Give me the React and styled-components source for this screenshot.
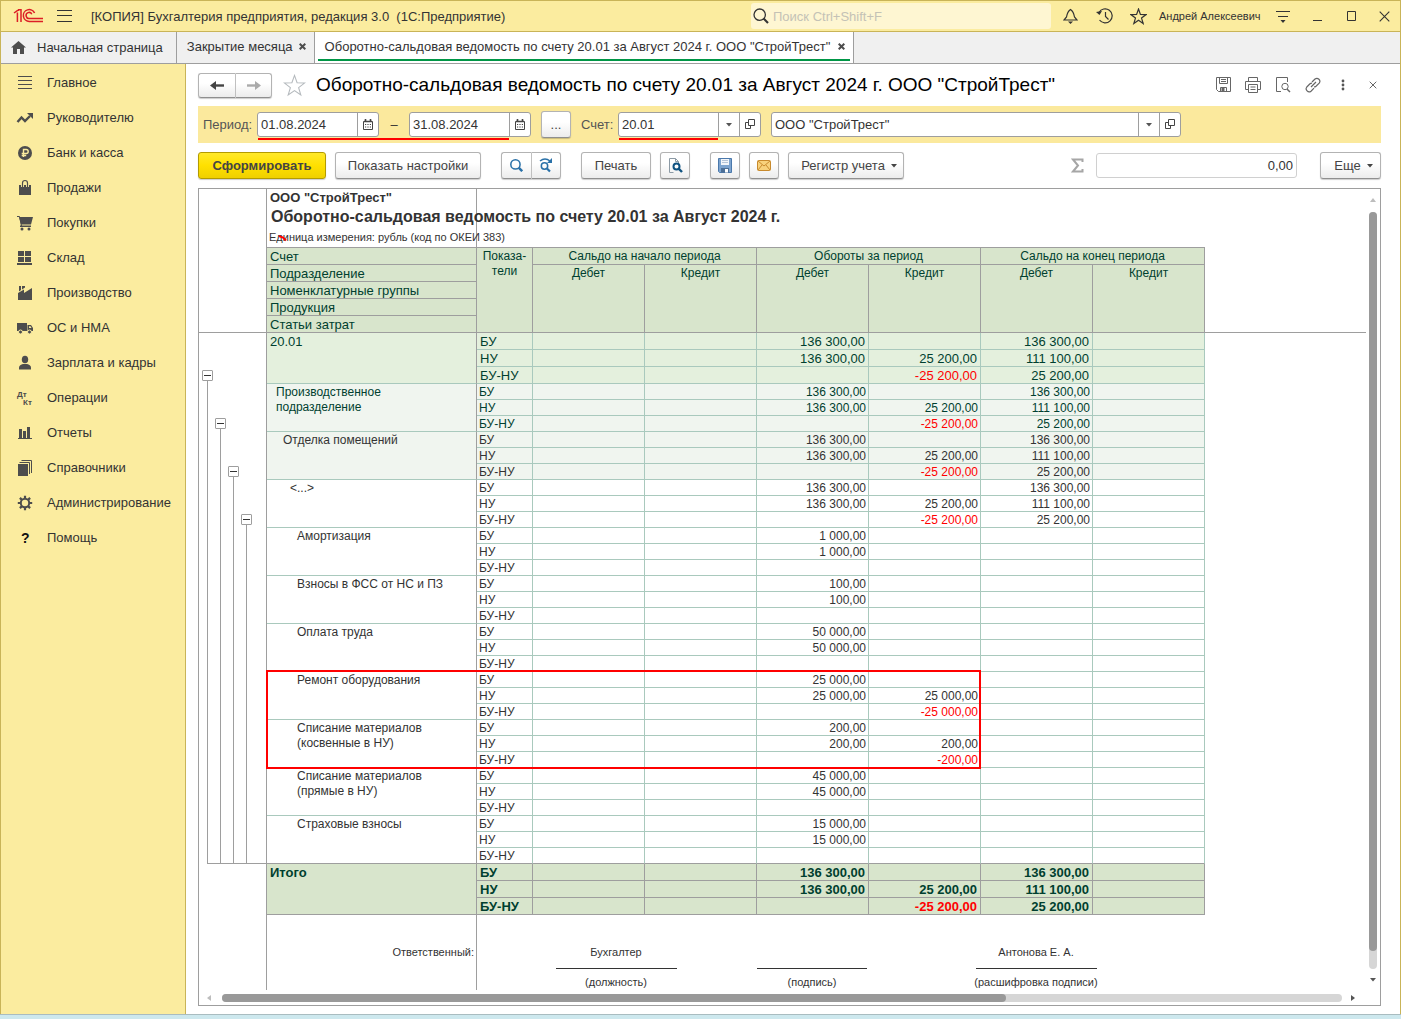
import React from "react";
import styled, { createGlobalStyle } from "styled-components";

const line = "#9e9e9e";
const mint = "#a9c9bd";
const ink = "#333333";

const GlobalStyle = createGlobalStyle`
  *, *::before, *::after { box-sizing: border-box; }
  body { margin: 0; background: #ffffff; }
  body, button, input { font-family: "Liberation Sans", Arial, sans-serif; font-size: 13px; color: ${ink}; }
  button { padding: 0; cursor: pointer; }
  svg { display: block; flex: none; }
  h1, h2, p { margin: 0; }
`;

/* ---------- window ---------- */

const Window = styled.div`
  display: flex;
  flex-direction: column;
  min-height: 100vh;
`;

const WindowBody = styled.div`
  display: flex;
  flex-direction: column;
  flex: 1;
  border: 1px solid #c9b458;
  border-bottom: 0;
`;

const Desktop = styled.div`
  height: 5px;
  background: #cde8ee;
  border-top: 1px solid #a9bcc0;
`;

const TitleBar = styled.header`
  display: flex;
  align-items: center;
  height: 31px;
  background: #fbec9f;
  border-bottom: 1px solid #c9b458;
`;

const Logo = styled.span`
  padding: 0 13px 0 12px;
`;

const AppTitle = styled.span`
  flex: 1;
  padding-left: 19px;
  white-space: pre;
`;

const PlainButton = styled.button`
  display: flex;
  align-items: center;
  justify-content: center;
  width: ${(p) => p.$w || "34px"};
  height: 28px;
  border: 0;
  background: none;
  color: ${(p) => p.$color || ink};
`;

const Search = styled.label`
  display: flex;
  align-items: center;
  gap: 4px;
  width: 300px;
  height: 26px;
  margin-right: 2px;
  padding-left: 2px;
  border-radius: 3px;
  background: #fef6d2;
`;

const SearchInput = styled.input`
  flex: 1;
  min-width: 0;
  border: 0;
  outline: 0;
  padding: 0;
  background: none;
  &::placeholder { color: #c4c2b6; opacity: 1; }
`;

const UserName = styled.a`
  width: 111px;
  padding-left: 4px;
  font-size: 11px;
  color: ${ink};
  text-decoration: none;
  white-space: nowrap;
`;

/* ---------- tabs ---------- */

const Tabs = styled.nav`
  display: flex;
  height: 32px;
  background: #f0f0f0;
  border-bottom: 1px solid ${line};
`;

const Tab = styled.div`
  display: flex;
  align-items: center;
  padding: 0 3px;
  border-right: 1px solid ${line};
  background: ${(p) => (p.$active ? "#ffffff" : "none")};
`;

const TabInner = styled.div`
  display: flex;
  align-items: center;
  gap: ${(p) => (p.$home ? "11px" : "2px")};
  height: 100%;
  padding: ${(p) => (p.$home ? "0 10px 0 7px" : "0 0 0 7px")};
`;

const ActiveLine = styled.div`
  display: flex;
  height: 29px;
  align-self: flex-start;
  padding-top: 2px;
  border-bottom: 2px solid ${(p) => (p.$active ? "#009646" : "transparent")};
`;

const TabLink = styled.a`
  color: ${ink};
  text-decoration: none;
  white-space: nowrap;
`;

/* ---------- side menu ---------- */

const Columns = styled.div`
  display: flex;
  flex: 1;
`;

const Side = styled.nav`
  flex: none;
  width: 185px;
  padding-top: 1px;
  background: #fbec9f;
  border-right: 1px solid #c9b458;
`;

const SideItem = styled.a`
  display: flex;
  align-items: center;
  gap: 13px;
  height: 35px;
  padding-left: 15px;
  color: ${ink};
  text-decoration: none;
  white-space: nowrap;
`;

const Main = styled.main`
  display: flex;
  flex-direction: column;
  flex: 1;
  min-width: 0;
`;

/* ---------- page header ---------- */

const PageHead = styled.div`
  display: flex;
  align-items: center;
  height: 42px;
  padding: 0 12px;
`;

const Button = styled.button`
  display: flex;
  align-items: center;
  justify-content: center;
  gap: 6px;
  width: ${(p) => p.$w};
  height: 27px;
  padding-left: ${(p) => (p.$menu ? "6px" : "0")};
  border: 1px solid #b3b3b3;
  border-bottom-color: #8f8f8f;
  border-radius: 3px;
  background: linear-gradient(#ffffff 40%, #ececec);
  box-shadow: 0 1px 1px rgba(0, 0, 0, 0.2);
  color: #444444;
  white-space: nowrap;
`;

const Group = styled.div`
  display: flex;
  & > button:first-child {
    border-right-color: #c4c4c4;
    border-radius: 3px 0 0 3px;
  }
  & > button + button {
    border-left: 0;
    border-radius: 0 3px 3px 0;
  }
`;

const NavButton = styled(Button)`
  height: 25px;
`;

const PrimaryButton = styled(Button)`
  border-color: #b39b00;
  background: linear-gradient(#ffe92a, #ffe000 50%, #efd000);
  font-weight: bold;
`;

const StarSlot = styled.span`
  padding: 0 10px 0 11px;
`;

const PageTitle = styled.h1`
  flex: 1;
  font-size: 19px;
  line-height: 24px;
  font-weight: normal;
  color: #000000;
  white-space: nowrap;
`;

/* ---------- filter ---------- */

const Filter = styled.div`
  display: flex;
  align-items: center;
  height: 37px;
  margin: 0 19px 0 12px;
  padding-left: 5px;
  background: #fbe99d;
`;

const FilterLabel = styled.label`
  width: ${(p) => p.$w};
  color: #555555;
`;

const Dash = styled.span`
  width: 30px;
  text-align: center;
`;

const Field = styled.div`
  position: relative;
  display: flex;
  width: ${(p) => p.$w};
  height: 25px;
  margin-right: ${(p) => p.$after || "0"};
  border: 1px solid ${line};
  border-radius: 3px;
  background: #ffffff;
`;

const FieldInput = styled.input`
  flex: 1;
  min-width: 0;
  padding: 0 3px;
  border: 0;
  outline: 0;
  background: none;
`;

const FieldButton = styled.button`
  display: flex;
  align-items: center;
  justify-content: center;
  width: 21px;
  border: 0;
  border-left: 1px solid ${line};
  background: none;
  color: #444444;
`;

const Mark = styled.span`
  position: absolute;
  left: 0;
  top: 25px;
  width: ${(p) => p.$w};
  height: 2px;
  z-index: 1;
  background: #ff0000;
`;

/* ---------- toolbar ---------- */

const Toolbar = styled.div`
  display: flex;
  align-items: center;
  height: 45px;
  padding: 0 19px 0 12px;
`;

const Cluster = styled.div`
  display: flex;
  gap: 9px;
  margin-right: 20px;
`;

const Spacer = styled.div`
  flex: 1;
`;

const PeriodPicker = styled(Button)`
  margin-right: 10px;
`;

const Sum = styled.label`
  display: flex;
  align-items: center;
  gap: 12px;
  margin-right: 23px;
`;

const SumInput = styled.input`
  width: 201px;
  height: 25px;
  padding: 0 3px;
  border: 1px solid #d0d0d0;
  border-radius: 3px;
  text-align: right;
`;

/* ---------- report ---------- */

const Frame = styled.section`
  display: grid;
  grid-template-columns: 1fr 14px;
  grid-template-rows: 1fr 15px;
  flex: 1;
  margin: 0 19px 8px 12px;
  border: 1px solid ${line};
`;

const Sheet = styled.div`
  display: flex;
  min-width: 0;
`;

const Gutter = styled.div`
  flex: none;
  width: 67px;
`;

const Freeze = styled.div`
  height: 144px;
  border-bottom: 1px solid ${line};
`;

const FreezeRest = styled.div`
  flex: 1;
`;

const Tree = styled.div`
  display: flex;
  height: 531px;
  margin-left: 8px;
  border-bottom: 1px solid ${line};
`;

const Branch = styled.div`
  display: flex;
  flex-direction: column;
  width: 13px;
  padding-top: ${(p) => 37 + p.$level * 48}px;
`;

const Toggle = styled.button`
  display: flex;
  align-items: center;
  justify-content: center;
  width: 11px;
  height: 11px;
  margin-left: -5px;
  border: 1px solid ${line};
  border-radius: 1px;
  background: #ffffff;
  &::before { content: ""; width: 7px; height: 1px; background: ${ink}; }
`;

const Stem = styled.div`
  flex: 1;
  width: 1px;
  background: ${line};
`;

const Paper = styled.div`
  flex: none;
  width: 939px;
  border-left: 1px solid ${line};
  background: linear-gradient(${line}, ${line}) 209px 0 / 1px 100% no-repeat;
`;

const PaperHead = styled.div`
  position: relative;
  height: 58px;
  padding: 0 3px;
`;

const Company = styled.p`
  font-weight: bold;
  line-height: 17px;
`;

const ReportTitle = styled.h2`
  padding-left: 1px;
  font-size: 16px;
  line-height: 22px;
  white-space: nowrap;
`;

const Units = styled.p`
  margin-left: -1px;
  font-size: 11px;
  line-height: 18px;
`;

const Scratch = styled.svg`
  position: absolute;
  left: 11px;
  top: 45px;
`;

const TableArea = styled.div`
  position: relative;
`;

const Highlight = styled.div`
  position: absolute;
  left: -1px;
  top: 423px;
  width: 715px;
  height: 99px;
  border: 2px solid #ff0000;
  pointer-events: none;
`;

const Table = styled.table`
  width: 938px;
  table-layout: fixed;
  border-spacing: 0;
  border-top: 1px solid ${line};
`;

const Th = styled.th`
  height: 17px;
  padding: ${(p) => (p.$left ? "2px 3px 0" : p.$tall ? "1px 0 0" : "0")};
  border-right: 1px solid ${line};
  border-bottom: 1px solid ${line};
  background: #d8e5cc;
  color: #003f2f;
  font-size: ${(p) => (p.$left ? "13px" : "12px")};
  line-height: ${(p) => (p.$left ? "14px" : p.$tall ? "15px" : "16px")};
  font-weight: normal;
  text-align: ${(p) => (p.$left ? "left" : "center")};
  vertical-align: top;
`;

const tones = {
  account: { bg: "#e4f0dd", fg: "#003f2f", size: 13, row: 17, grid: mint },
  unit: { bg: "#f0f5ef", fg: "#003f2f", size: 12, row: 16, grid: mint },
  group: { bg: "#f0f5ef", fg: ink, size: 12, row: 16, grid: mint },
  item: { bg: "#ffffff", fg: ink, size: 12, row: 16, grid: mint },
  total: { bg: "#d8e5cc", fg: "#003f2f", size: 13, row: 17, grid: line },
};

const Tr = styled.tr`
  background: ${(p) => tones[p.$tone].bg};
  color: ${(p) => tones[p.$tone].fg};
  font-size: ${(p) => tones[p.$tone].size}px;
  line-height: ${(p) => tones[p.$tone].row - 3}px;
  font-weight: ${(p) => (p.$tone === "total" ? "bold" : "normal")};
  --grid: ${(p) => (p.$last ? line : tones[p.$tone].grid)};
  --column: ${(p) => tones[p.$tone].grid};
  --side: ${(p) => (tones[p.$tone].size === 13 ? 3 : 2)}px;
  height: ${(p) => tones[p.$tone].row}px;
`;

const NameCell = styled.th`
  padding: 1px 3px 0 ${(p) => p.$indent}px;
  border-right: 1px solid ${line};
  border-bottom: 1px solid ${(p) => (p.$last ? line : "var(--grid)")};
  line-height: 15px;
  font-weight: inherit;
  text-align: left;
  vertical-align: top;
  white-space: pre-line;
`;

const Td = styled.td`
  padding: 2px var(--side) 0;
  border-right: 1px solid var(--column);
  border-bottom: 1px solid var(--grid);
  text-align: ${(p) => (p.$kind ? "left" : "right")};
  vertical-align: top;
  color: ${(p) => (p.$negative ? "#ff0000" : "inherit")};
  white-space: nowrap;
`;

const Signatures = styled.div`
  display: grid;
  grid-template-columns: 209px 280px 112px 336px;
  grid-template-rows: 54px 21px;
  font-size: 11px;
  line-height: 15px;
`;

const Responsible = styled.div`
  align-self: start;
  padding: 30px 2px 0 0;
  text-align: right;
`;

const Signed = styled.div`
  justify-self: center;
  width: ${(p) => p.$w};
  padding-top: 30px;
  border-bottom: 1px solid ${ink};
  text-align: center;
`;

const Caption = styled.div`
  padding-top: 6px;
  text-align: center;
`;

const VBar = styled.div`
  display: flex;
  flex-direction: column;
  align-items: center;
  padding: 9px 0 8px;
`;

const HBar = styled.div`
  display: flex;
  align-items: center;
  padding: 0 9px 0 8px;
`;

const Track = styled.div`
  display: flex;
  flex-direction: ${(p) => (p.$vertical ? "column" : "row")};
  flex: 1;
  ${(p) => (p.$vertical ? "width: 8px; margin: 10px 0 9px;" : "height: 8px; margin: 0 9px;")}
  border-radius: 4px;
  background: #d6d6d6;
`;

const Thumb = styled.div`
  flex: 0 0 ${(p) => p.$size};
  border-radius: 4px;
  background: #999999;
`;

/* ---------- icons ---------- */

const Svg = ({ s = 16, w, h, box, children, ...rest }) => (
  <svg width={w || s} height={h || s} viewBox={box || `0 0 ${w || s} ${h || s}`} fill="none" stroke="currentColor" aria-hidden="true" {...rest}>
    {children}
  </svg>
);

const Arrow = ({ dir, color = "#555555" }) => {
  const d = { down: "M0 0h6L3 3.5z", up: "M0 4h6L3 0z", left: "M4 0v6L0 3z", right: "M0 0v6L4 3z" }[dir];
  return (
    <Svg w={6} h={dir === "down" || dir === "up" ? 4 : 6} fill={color} stroke="none">
      <path d={d} />
    </Svg>
  );
};

const Cross = ({ s = 7, sw = 2 }) => (
  <Svg s={s} strokeWidth={sw}>
    <path d={`M.7 .7L${s - 0.7} ${s - 0.7}M${s - 0.7} .7L.7 ${s - 0.7}`} />
  </Svg>
);

const LogoIcon = () => (
  <Svg w={30} h={16} stroke="#dc1e26" strokeWidth="1.5">
    <path d="M1 5L5 2.2M4.400 4.500V14M5 2.200h1M5 1.800H8V14" />
    <path d="M21.6 5A5.900 5.900 0 1 0 16.400 13.400H30M18.800 6.200A3 3 0 1 0 16.600 10.400H30" />
  </Svg>
);

const Star = ({ s, color, sw }) => (
  <Svg s={s} box="0 0 24 24" stroke={color} strokeWidth={sw}>
    <path d="M12 1.5l2.7 7.6 8 .2-6.4 4.9 2.3 7.7-6.6-4.6-6.6 4.6 2.3-7.7L1.300 9.300l8-.2z" />
  </Svg>
);

const Magnifier = ({ s = 16, sw = 1.3, color = "currentColor" }) => (
  <Svg s={s} box="0 0 16 16" stroke={color} strokeWidth={sw}>
    <circle cx="6.7" cy="6.7" r="5.7" />
    <path d="M10.6 10.6L15 15" strokeWidth={sw * 1.6} />
  </Svg>
);

const Calendar = () => (
  <Svg w={10} h={11}>
    <path d="M.5 2.5h9v8h-9z" />
    <path d="M1 2.5h8M2.5 0v2M7.5 0v2" strokeWidth="1.6" />
    <path d="M2 5.5h6M2 8h6" strokeDasharray="1.2 1.2" />
  </Svg>
);

const OpenIcon = () => (
  <Svg w={10} h={11}>
    <path d="M3.5 .5h6v6h-6zM3.5 3.5h-3v6h5v-3" />
  </Svg>
);

const dark = "#4d4d4d";
const F = { fill: dark, stroke: "none" };

const SideGlyphs = {
  main: <path d="M2 2.5h14M2 6.5h14M2 10.5h14M2 14.5h14" stroke={dark} />,
  manager: (
    <g stroke={dark}>
      <path d="M1.500 13l4-4.500 3.500 3.500 5-5" strokeWidth="2.4" />
      <path d="M11 4h6v6z" {...F} />
    </g>
  ),
  bank: (
    <g>
      <circle cx="9" cy="9" r="7" {...F} />
      <path d="M7.5 13V5.5h2.7a2 2 0 0 1 0 4H5.7M5.7 11.500h4.500" stroke="#fbec9f" strokeWidth="1.4" />
    </g>
  ),
  sales: (
    <g>
      <path d="M3 6h12v10H3z" {...F} />
      <path d="M6.5 8V4a2.500 2.500 0 0 1 5 0V8" stroke="#fbec9f" strokeWidth="3" />
      <path d="M6.5 8V4a2.500 2.500 0 0 1 5 0V8" stroke={dark} strokeWidth="1.2" />
    </g>
  ),
  purchases: (
    <g>
      <path d="M3 3h14l-2 7.500H5zM4 11.500h11V13H4z" {...F} />
      <path d="M1 2.500h2.500L5.500 12" stroke={dark} />
      <circle cx="6" cy="15" r="1.5" {...F} />
      <circle cx="13" cy="15" r="1.5" {...F} />
    </g>
  ),
  stock: <path d="M2 2h6v5H2zM9 2h6v5H9zM2 8h6v5H2zM9 8h6v5H9zM1 14h15v2H1z" {...F} />,
  production: <path d="M2 16V9l6-3.500V9l8-5v12zM3 2h2v4L3 7.500zM6 2h3v1.500L6 5.500z" {...F} />,
  assets: (
    <g>
      <path d="M1 4h10v8H1zM11.500 6H15l2 3v3h-5.500z" {...F} />
      <path d="M13 7.300h1.500l1 1.700H13z" fill="#fbec9f" stroke="none" />
      <circle cx="4.500" cy="13" r="2" {...F} stroke="#fbec9f" />
      <circle cx="13.500" cy="13" r="2" {...F} stroke="#fbec9f" />
    </g>
  ),
  salary: (
    <g {...F}>
      <ellipse cx="9" cy="5.5" rx="3.2" ry="3.8" />
      <path d="M3 15.500v-2c0-2 2-3 4-3.500h4c2 .5 4 1.500 4 3.500v2z" />
    </g>
  ),
  operations: (
    <g {...F} fontFamily="Liberation Sans, Arial, sans-serif" fontWeight="bold" fontSize="8">
      <text x="1" y="8">Дт</text>
      <text x="7" y="16">Кт</text>
    </g>
  ),
  reports: <path d="M3 5h3v9H3zM7 7h3v7H7zM11 3h3v11h-3zM2 14h14v1H2z" {...F} />,
  refs: (
    <g>
      <path d="M2 5h10v12H2z" {...F} />
      <path d="M3.500 3.500h10V15M5.500 1.500h10V14" stroke={dark} />
    </g>
  ),
  admin: (
    <g stroke={dark}>
      <circle cx="9" cy="9" r="4.2" strokeWidth="2" />
      <path d="M9 1.800v3M9 13.200v3M1.800 9h3M13.200 9h3M3.900 3.900l2 2M12.100 12.100l2 2M3.900 14.100l2-2M12.100 5.900l2-2" strokeWidth="2.2" />
    </g>
  ),
  help: (
    <text x="5" y="14" fill="#111111" stroke="none" fontFamily="Liberation Sans, Arial, sans-serif" fontWeight="bold" fontSize="14">?</text>
  ),
};

const menu = [
  ["main", "Главное"],
  ["manager", "Руководителю"],
  ["bank", "Банк и касса"],
  ["sales", "Продажи"],
  ["purchases", "Покупки"],
  ["stock", "Склад"],
  ["production", "Производство"],
  ["assets", "ОС и НМА"],
  ["salary", "Зарплата и кадры"],
  ["operations", "Операции"],
  ["reports", "Отчеты"],
  ["refs", "Справочники"],
  ["admin", "Администрирование"],
  ["help", "Помощь"],
];

/* ---------- data ---------- */

const full = [
  ["", "", "136 300,00", "", "136 300,00", ""],
  ["", "", "136 300,00", "25 200,00", "111 100,00", ""],
  ["", "", "", "-25 200,00", "25 200,00", ""],
];

const item = (amount, credit, diff) => [
  ["", "", amount, "", "", ""],
  ["", "", amount, credit || "", "", ""],
  ["", "", "", diff || "", "", ""],
];

const groups = [
  { name: "20.01", tone: "account", indent: 3, rows: full },
  { name: "Производственное\nподразделение", tone: "unit", indent: 9, rows: full },
  { name: "Отделка помещений", tone: "group", indent: 16, rows: full },
  { name: "<...>", tone: "item", indent: 23, rows: full },
  { name: "Амортизация", tone: "item", indent: 30, rows: item("1 000,00") },
  { name: "Взносы в ФСС от НС и ПЗ", tone: "item", indent: 30, rows: item("100,00") },
  { name: "Оплата труда", tone: "item", indent: 30, rows: item("50 000,00") },
  { name: "Ремонт оборудования", tone: "item", indent: 30, rows: item("25 000,00", "25 000,00", "-25 000,00") },
  { name: "Списание материалов\n(косвенные в НУ)", tone: "item", indent: 30, rows: item("200,00", "200,00", "-200,00") },
  { name: "Списание материалов\n(прямые в НУ)", tone: "item", indent: 30, rows: item("45 000,00") },
  { name: "Страховые взносы", tone: "item", indent: 30, rows: item("15 000,00") },
  { name: "Итого", tone: "total", indent: 3, rows: full },
];

const kinds = ["БУ", "НУ", "БУ-НУ"];

const Col = styled.col`
  width: ${(p) => p.$w};
`;

const ReportTable = () => (
  <Table>
    <colgroup>
      <Col $w="210px" />
      <Col $w="56px" />
      {[0, 1, 2, 3, 4, 5].map((i) => (
        <Col key={i} $w="112px" />
      ))}
    </colgroup>
    <thead>
      <tr>
        <Th $left>Счет</Th>
        <Th $tall rowSpan={5}>Показа-<br />тели</Th>
        <Th colSpan={2}>Сальдо на начало периода</Th>
        <Th colSpan={2}>Обороты за период</Th>
        <Th colSpan={2}>Сальдо на конец периода</Th>
      </tr>
      <tr>
        <Th $left>Подразделение</Th>
        {["Дебет", "Кредит", "Дебет", "Кредит", "Дебет", "Кредит"].map((t, i) => (
          <Th key={i} rowSpan={4}>{t}</Th>
        ))}
      </tr>
      {["Номенклатурные группы", "Продукция", "Статьи затрат"].map((t) => (
        <tr key={t}>
          <Th $left>{t}</Th>
        </tr>
      ))}
    </thead>
    {groups.map((g, gi) => (
      <tbody key={g.name}>
        {g.rows.map((row, ri) => (
          <Tr key={ri} $tone={g.tone} $last={ri === 2 && gi === groups.length - 2}>
            {ri === 0 && (
              <NameCell rowSpan={3} $indent={g.indent} $last={gi === groups.length - 2} scope="rowgroup">
                {g.name}
              </NameCell>
            )}
            <Td $kind>{kinds[ri]}</Td>
            {row.map((v, ci) => (
              <Td key={ci} $negative={v.startsWith("-")}>{v}</Td>
            ))}
          </Tr>
        ))}
      </tbody>
    ))}
  </Table>
);

export default function App() {
  return (
    <Window>
      <GlobalStyle />
      <WindowBody>
        <TitleBar>
          <Logo><LogoIcon /></Logo>
          <PlainButton $w="16px" aria-label="Меню">
            <Svg w={15} h={12}><path d="M0 .5h15M0 5.500h15M0 11.500h15" /></Svg>
          </PlainButton>
          <AppTitle>{"[КОПИЯ] Бухгалтерия предприятия, редакция 3.0  (1С:Предприятие)"}</AppTitle>
          <Search>
            <Magnifier />
            <SearchInput type="text" placeholder="Поиск Ctrl+Shift+F" aria-label="Поиск" />
          </Search>
          <PlainButton aria-label="Уведомления">
            <Svg w={15} h={16} strokeWidth="1.2">
              <path d="M1 12h13L11.500 9C11 6 10.500 3.500 7.500 1.500 4.500 3.500 4 6 3.500 9z" />
              <path d="M5 13.500h5L7.500 16z" fill="currentColor" stroke="none" />
            </Svg>
          </PlainButton>
          <PlainButton aria-label="История">
            <Svg w={17} h={16} strokeWidth="1.2">
              <path d="M3 4.500A7 7 0 1 1 3.500 12M9.500 4v4.500l3 3" />
              <path d="M0 4l3.500 3L6 3z" fill="currentColor" stroke="none" />
            </Svg>
          </PlainButton>
          <PlainButton aria-label="Избранное"><Star s={17} color={ink} sw={1.7} /></PlainButton>
          <UserName href="#user">Андрей Алексеевич</UserName>
          <PlainButton aria-label="Настройки">
            <Svg w={14} h={14}>
              <path d="M0 2.500h14M2 7.500h10" />
              <path d="M4.500 11h5L7 14z" fill="currentColor" stroke="none" />
            </Svg>
          </PlainButton>
          <PlainButton aria-label="Свернуть"><Svg w={9} h={10}><path d="M0 9.500h9" /></Svg></PlainButton>
          <PlainButton aria-label="Развернуть"><Svg w={9} h={10}><path d="M.5 .5h8v9h-8z" /></Svg></PlainButton>
          <PlainButton $w="32px" aria-label="Закрыть"><Cross s={11} sw={1.1} /></PlainButton>
        </TitleBar>

        <Tabs>
          <Tab>
            <TabInner $home>
              <Svg w={15} h={13} fill={dark} stroke="none" box="0 0 15 13">
                <path d="M7.500 0L15 6.500h-2V13H9V8H6v5H2V6.500H0z" />
              </Svg>
              <TabLink href="#home">Начальная страница</TabLink>
            </TabInner>
          </Tab>
          <Tab>
            <ActiveLine>
              <TabInner>
                <TabLink href="#closing">Закрытие месяца</TabLink>
                <PlainButton $w="16px" $color={dark} aria-label="Закрыть вкладку"><Cross /></PlainButton>
              </TabInner>
            </ActiveLine>
          </Tab>
          <Tab $active>
            <ActiveLine $active>
              <TabInner>
                <TabLink href="#report">Оборотно-сальдовая ведомость по счету 20.01 за Август 2024 г. ООО "СтройТрест"</TabLink>
                <PlainButton $w="18px" $color={dark} aria-label="Закрыть вкладку"><Cross /></PlainButton>
              </TabInner>
            </ActiveLine>
          </Tab>
        </Tabs>

        <Columns>
          <Side>
            {menu.map(([id, label]) => (
              <SideItem key={id} href={`#${id}`}>
                <Svg s={18}>{SideGlyphs[id]}</Svg>
                {label}
              </SideItem>
            ))}
          </Side>

          <Main>
            <PageHead>
              <Group>
                <NavButton $w="38px" aria-label="Назад">
                  <Svg w={14} h={9} stroke="#444444" strokeWidth="2.400"><path d="M3 4.500h11" /><path d="M0 4.500L6 0v9z" fill="#444444" stroke="none" /></Svg>
                </NavButton>
                <NavButton $w="36px" aria-label="Вперед">
                  <Svg w={14} h={9} stroke="#aaaaaa" strokeWidth="2.400"><path d="M0 4.500h11" /><path d="M14 4.500L8 0v9z" fill="#aaaaaa" stroke="none" /></Svg>
                </NavButton>
              </Group>
              <StarSlot><Star s={23} color="#b4b9bd" sw={1.1} /></StarSlot>
              <PageTitle>Оборотно-сальдовая ведомость по счету 20.01 за Август 2024 г. ООО "СтройТрест"</PageTitle>
              <PlainButton $w="30px" $color="#666666" aria-label="Сохранить">
                <Svg w={15} h={16}><path d="M.5 .5h14v14h-12l-2-2zM3.500 .5v6h8v-6M5 2.500h5M5 4.500h5M4.500 14.500v-4h6v4" /><path d="M6 11h2v3H6z" fill="currentColor" /></Svg>
              </PlainButton>
              <PlainButton $w="30px" $color="#666666" aria-label="Печать">
                <Svg s={16}><path d="M3.500 4.500v-4h9v4M3.500 12.500h-3v-8h15v8h-3M3.500 7.500h9v8h-9zM5.500 10h5M5.500 12.500h5" /></Svg>
              </PlainButton>
              <PlainButton $w="30px" $color="#666666" aria-label="Просмотр">
                <Svg s={16}><path d="M6 14.500H1.500V.5h11V5" /><circle cx="10" cy="9.500" r="3.200" /><path d="M12 12l3 3" strokeWidth="1.500" /></Svg>
              </PlainButton>
              <PlainButton $w="30px" $color="#666666" aria-label="Ссылка">
                <Svg s={16} strokeWidth="1.2">
                  <path d="M6 10l5-5M7 5l3-3a3 3 0 0 1 4.200 4.200L11 9.200a3 3 0 0 1-2 .7M9 11.200l-3 3A3 3 0 0 1 1.800 10L5 6.800a3 3 0 0 1 2-.7" />
                </Svg>
              </PlainButton>
              <PlainButton $w="30px" $color="#555555" aria-label="Ещё">
                <Svg w={4} h={12} fill="currentColor" stroke="none"><circle cx="2" cy="2" r="1.4" /><circle cx="2" cy="6" r="1.4" /><circle cx="2" cy="10" r="1.4" /></Svg>
              </PlainButton>
              <PlainButton $w="30px" $color="#666666" aria-label="Закрыть отчет"><Cross s={8} sw={1} /></PlainButton>
            </PageHead>

            <Filter>
              <FilterLabel htmlFor="from" $w="54px">Период:</FilterLabel>
              <Field $w="122px">
                <FieldInput id="from" type="text" defaultValue="01.08.2024" />
                <FieldButton aria-label="Выбрать дату начала"><Calendar /></FieldButton>
                <Mark $w="251px" />
              </Field>
              <Dash>–</Dash>
              <Field $w="122px" $after="10px">
                <FieldInput id="to" type="text" defaultValue="31.08.2024" aria-label="Конец периода" />
                <FieldButton aria-label="Выбрать дату конца"><Calendar /></FieldButton>
              </Field>
              <PeriodPicker $w="30px">...</PeriodPicker>
              <FilterLabel htmlFor="account" $w="37px">Счет:</FilterLabel>
              <Field $w="143px" $after="10px">
                <FieldInput id="account" type="text" defaultValue="20.01" />
                <FieldButton aria-label="Список счетов"><Arrow dir="down" /></FieldButton>
                <FieldButton aria-label="Открыть счет"><OpenIcon /></FieldButton>
                <Mark $w="99px" />
              </Field>
              <Field $w="410px">
                <FieldInput type="text" defaultValue={'ООО "СтройТрест"'} aria-label="Организация" />
                <FieldButton aria-label="Список организаций"><Arrow dir="down" /></FieldButton>
                <FieldButton aria-label="Открыть организацию"><OpenIcon /></FieldButton>
              </Field>
            </Filter>

            <Toolbar>
              <Cluster>
                <PrimaryButton $w="128px">Сформировать</PrimaryButton>
                <Button $w="146px">Показать настройки</Button>
              </Cluster>
              <Cluster>
                <Group>
                  <Button $w="31px" aria-label="Найти"><Magnifier s={13} sw={1.9} color="#2a71a8" /></Button>
                  <Button $w="29px" aria-label="Найти далее">
                    <Svg w={14} h={15} stroke="#2a71a8" strokeWidth="1.5">
                      <circle cx="5.5" cy="8" r="3.2" /><path d="M8 10.500l3 3" strokeWidth="2.2" /><path d="M1 3c3-2.500 7-2.500 10 0" /><path d="M13 0v5H8z" fill="#2a71a8" stroke="none" />
                    </Svg>
                  </Button>
                </Group>
              </Cluster>
              <Cluster>
                <Button $w="70px">Печать</Button>
                <Button $w="30px" aria-label="Предварительный просмотр">
                  <Svg w={16} h={15}>
                    <path d="M2.500 14.500V.5h6l3 3v3M2.500 14.500h4" stroke="#8c9aa5" /><path d="M8.500 .5v3h3" stroke="#8c9aa5" />
                    <circle cx="9.500" cy="8.500" r="3" stroke="#0f5280" strokeWidth="2" /><path d="M11.500 10.500l3.500 3.500" stroke="#0f5280" strokeWidth="2.400" />
                  </Svg>
                </Button>
              </Cluster>
              <Cluster>
                <Button $w="30px" aria-label="Сохранить как">
                  <Svg w={14} h={15}>
                    <path d="M.5 .5h13v14h-12l-1-1z" fill="#7da4cf" stroke="#4a78ab" /><path d="M3 1h8v6H3z" fill="#f3f6fa" stroke="none" />
                    <path d="M4 2.500h6M4 4.500h6" stroke="#b5c5d8" /><path d="M3 10h8v4.500H3z" fill="#4c6f96" stroke="none" /><path d="M7 11h3v3.500H7z" fill="#ffffff" stroke="none" />
                  </Svg>
                </Button>
                <Button $w="30px" aria-label="Отправить">
                  <Svg w={14} h={11}>
                    <rect x=".5" y=".5" width="13" height="10" rx="1" fill="#f8d27c" stroke="#c88a2d" /><path d="M1 1l6 5 6-5M1 10l4-5M13 10L9 5" stroke="#c88a2d" />
                  </Svg>
                </Button>
                <Button $w="116px" $menu>Регистр учета <Arrow dir="down" color="#444444" /></Button>
              </Cluster>
              <Spacer />
              <Sum>
                <Svg w={13} h={15} stroke="#a6a6a6" strokeWidth="2"><path d="M11.500 4V1.500H2L7 7.500 2 13.500h9.500V11" /></Svg>
                <SumInput type="text" defaultValue="0,00" aria-label="Сумма" />
              </Sum>
              <Button $w="61px" $menu>Еще <Arrow dir="down" color="#444444" /></Button>
            </Toolbar>

            <Frame>
              <Sheet>
                <Gutter>
                  <Freeze />
                  <Tree>
                    {[0, 1, 2, 3].map((level) => (
                      <Branch key={level} $level={level}>
                        <Toggle aria-label={`Свернуть уровень ${level + 1}`} />
                        <Stem />
                      </Branch>
                    ))}
                  </Tree>
                </Gutter>
                <Paper>
                  <PaperHead>
                    <Company>ООО "СтройТрест"</Company>
                    <ReportTitle>Оборотно-сальдовая ведомость по счету 20.01 за Август 2024 г.</ReportTitle>
                    <Units>Единица измерения: рубль (код по ОКЕИ 383)</Units>
                    <Scratch width="10" height="8" viewBox="0 0 10 8" fill="none" stroke="#ff0000" strokeWidth="2" aria-hidden="true">
                      <path d="M1 2l4 1.500 3 3" />
                    </Scratch>
                  </PaperHead>
                  <TableArea>
                    <ReportTable />
                    <Highlight />
                  </TableArea>
                  <Signatures>
                    <Responsible>Ответственный:</Responsible>
                    <Signed $w="121px">Бухгалтер</Signed>
                    <Signed $w="110px" />
                    <Signed $w="121px">Антонова Е. А.</Signed>
                    <span />
                    <Caption>(должность)</Caption>
                    <Caption>(подпись)</Caption>
                    <Caption>(расшифровка подписи)</Caption>
                  </Signatures>
                </Paper>
                <FreezeRest><Freeze /></FreezeRest>
              </Sheet>
              <VBar>
                <Arrow dir="up" color="#bdbdbd" />
                <Track $vertical><Thumb $size="97.6%" /></Track>
                <Arrow dir="down" />
              </VBar>
              <HBar>
                <Arrow dir="left" color="#bdbdbd" />
                <Track><Thumb $size="70%" /></Track>
                <Arrow dir="right" />
              </HBar>
            </Frame>
          </Main>
        </Columns>
      </WindowBody>
      <Desktop />
    </Window>
  );
}
